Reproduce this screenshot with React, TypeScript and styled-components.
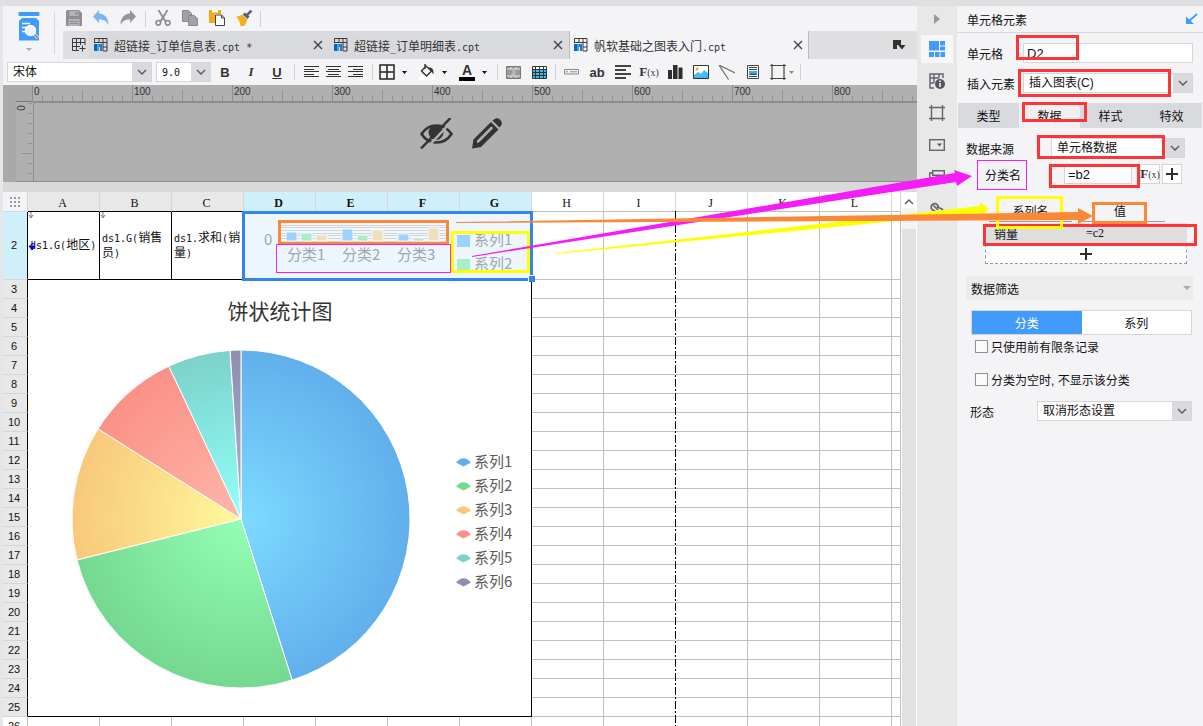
import React from 'react';
import styled, { createGlobalStyle } from 'styled-components';

const sans = `"Liberation Sans", "Noto Sans CJK SC", sans-serif`;
const mono = `"DejaVu Sans Mono", "Noto Sans CJK SC", monospace`;

const GlobalStyle = createGlobalStyle`
  * { box-sizing: border-box; }
  body { margin: 0; background: #f4f4f7; font-family: ${sans}; font-size: 12px; color: #111; overflow: hidden; }
  button, input, select { font: inherit; color: inherit; margin: 0; padding: 0; border: 0; border-radius: 0; background: none; outline: none; }
  svg { display: block; flex: none; }
`;

/* ---------- shell ---------- */

const Page = styled.div`
  position: relative;
  height: 100vh;
  display: flex;
  flex-direction: column;
  overflow: hidden;
`;
const TopStrip = styled.div`
  flex: 0 0 6px;
  background: #dfdfe1;
`;
const Body = styled.div`
  flex: 1;
  min-height: 0;
  display: flex;
  border-left: 3px solid #e6e6e8;
`;
const Workspace = styled.main`
  flex: 1;
  min-width: 0;
  display: flex;
  flex-direction: column;
`;

/* ---------- header ---------- */

const Header = styled.header`
  display: flex;
  height: 53px;
  flex: none;
`;
const LogoButton = styled.button`
  width: 52px;
  margin: 6px 0 5px;
  border-right: 1px solid #d9d9dc;
  display: flex;
  flex-direction: column;
  align-items: center;
  gap: 7px;
`;
const HeaderRight = styled.div`
  flex: 1;
  min-width: 0;
  margin-left: 8px;
  display: flex;
  flex-direction: column;
`;
const QuickBar = styled.div`
  height: 25px;
  display: flex;
  align-items: center;
`;
const QuickButton = styled.button`
  width: 27px;
  height: 24px;
  padding-left: 3px;
`;
const Separator = styled.span<{ $before?: number; $after?: number }>`
  width: 1px;
  height: 16px;
  background: #d2d2d6;
  flex: none;
  margin: 0 ${p => p.$after ?? 0}px 0 ${p => p.$before ?? 0}px;
`;
const TabBar = styled.nav`
  height: 28px;
  display: flex;
  background: #dfdfe1;
`;
const NewSheetButton = styled.button`
  width: 26px;
  flex: none;
  padding-left: 9px;
`;
const FileTab = styled.div<{ $active?: boolean }>`
  flex: 0 1 240px;
  min-width: 0;
  display: flex;
  align-items: center;
  gap: 6px;
  padding: 0 6px 0 5px;
  color: #333;
  white-space: nowrap;
  background: ${p => (p.$active ? '#f4f4f7' : '#d9dadd')};
  box-shadow: ${p => (p.$active ? 'inset 1px 0 #bcbcc0, inset -1px 0 #bcbcc0' : 'none')};
`;
const TabName = styled.span`
  flex: 1;
  overflow: hidden;
`;
const TabListButton = styled.button`
  margin-left: auto;
  padding-right: 11px;
`;
const LatinRun = styled.span`
  font-family: ${mono};
  font-size: 10px;
  white-space: pre;
`;

/* ---------- format bar ---------- */

const FormatBar = styled.div`
  height: 26px;
  flex: none;
  display: flex;
  align-items: center;
  padding-left: 4px;
`;
const ToolButton = styled.button<{ $width?: number }>`
  width: ${p => p.$width ?? 26}px;
  height: 24px;
  flex: none;
  display: flex;
  align-items: center;
  justify-content: center;
`;
const ComboTool = styled.button`
  width: 38px;
  height: 24px;
  margin-right: 2px;
  flex: none;
  display: flex;
  align-items: center;
  gap: 7px;
  &:last-of-type { gap: 3px; width: 34px; margin-right: 0; padding-left: 4px; }
`;
const Letter = styled.span<{ $italic?: boolean; $underline?: boolean }>`
  font-size: 13px;
  font-weight: 700;
  color: #333;
  font-family: ${p => (p.$italic ? '"Liberation Serif", serif' : sans)};
  font-style: ${p => (p.$italic ? 'italic' : 'normal')};
  text-decoration: ${p => (p.$underline ? 'underline' : 'none')};
`;
const ColorLetter = styled.span`
  width: 16px;
  font-size: 14px;
  line-height: 13px;
  font-weight: 700;
  color: #333;
  border-bottom: 4px solid #000;
`;
const Formula = styled.span`
  font-family: "Liberation Serif", serif;
  font-size: 13px;
  font-weight: 700;
  color: #333;
  small { font-size: 10px; font-weight: 400; }
`;

const SelectBox = styled.span<{ $width?: number; $gap?: number; $mono?: boolean }>`
  display: flex;
  flex: ${p => (p.$width ? `0 0 ${p.$width}px` : '1')};
  min-width: 0;
  margin-right: ${p => p.$gap ?? 0}px;
  height: 20px;
  border: 1px solid #d6d6da;
  background: #fff;
  font-family: ${p => (p.$mono ? mono : sans)};
  font-size: ${p => (p.$mono ? 10 : 12)}px;
`;
const NativeSelect = styled.select`
  appearance: none;
  flex: 1;
  min-width: 0;
  padding-left: 5px;
`;
const SelectArrow = styled.span`
  width: 19px;
  background: #d9dadd;
  display: flex;
  align-items: center;
  justify-content: center;
  pointer-events: none;
`;

/* ---------- ruler ---------- */

const Canvas = styled.section`
  height: 97px;
  flex: none;
  display: grid;
  grid-template: 17px 80px / 13px 17px minmax(0, 1fr);
  background: #b0b0b0;
  border-bottom: 1px solid #8e8e8e;
`;
const RulerGutter = styled.div`
  grid-row: 1 / 3;
  background: #a9a9a9;
`;
const RulerCorner = styled.div`
  border-bottom: 1px solid #777;
  background: #a9a9a9;
`;
const HorizontalRuler = styled.div`
  display: flex;
  overflow: hidden;
  margin-left: -1px;
  border-bottom: 1px solid #8e8e8e;
`;
const RulerMark = styled.span`
  flex: 0 0 100px;
  padding: 1px 0 0 1px;
  font-size: 10px;
  line-height: 12px;
  color: #333;
  border-left: 1px solid #8e8e8e;
  background:
    linear-gradient(#949494, #949494) 50px 5px / 1px 11px no-repeat border-box,
    repeating-linear-gradient(90deg, #949494 0 1px, transparent 1px 10px) 0 11px / 100% 5px no-repeat border-box;
`;
const VerticalRuler = styled.div`
  font-size: 10px;
  color: #333;
  line-height: 12px;
  background:
    linear-gradient(#949494, #949494) 5px 51px / 11px 1px no-repeat,
    repeating-linear-gradient(180deg, #949494 0 1px, transparent 1px 10px) 12px 1px / 4px 100% no-repeat;
  span { display: block; width: 12px; text-align: center; transform: rotate(-90deg); }
`;
const CanvasArea = styled.div`
  display: flex;
  justify-content: center;
  gap: 19px;
  padding: 15px 30px 0 0;
  border-left: 1px solid #8e8e8e;
  border-top: 1px solid #8e8e8e;
`;

/* ---------- sheet ---------- */

const SheetPane = styled.section`
  flex: 1;
  min-height: 0;
  display: flex;
  border-top: 10px solid #d9d9db;
`;
const SheetScroll = styled.div`
  position: relative;
  flex: 1;
  min-width: 0;
  overflow: hidden;
  background: #fff;
`;
const SheetTable = styled.table`
  width: 100%;
  table-layout: fixed;
  border-collapse: separate;
  border-spacing: 0;
  th, td { padding: 0; overflow: hidden; }
`;
type Tone = 'grey' | 'blue' | 'white';
const tones: Record<Tone, string> = { grey: '#e8e8e8', blue: '#cfeffb', white: '#ffffff' };
const ColumnHead = styled.th<{ $tone: Tone; $dark?: boolean }>`
  height: 20px;
  font: ${p => (p.$tone === 'blue' ? 700 : 400)} 12px "Liberation Serif", serif;
  padding: 3px 2px 0 0 !important;
  background: ${p => tones[p.$tone]};
  border-right: 1px solid #d6d6d9;
  border-bottom: 1px solid ${p => (p.$dark ? '#000' : '#c0c0c0')};
`;
const CornerHead = styled.th`
  background: #f4f4f7;
  border-right: 1px solid #d6d6d9;
  border-bottom: 1px solid #d6d6d9;
  svg { margin: 0 auto; }
`;
const RowHead = styled.th<{ $tone: Tone; $tall?: boolean }>`
  height: ${p => (p.$tall ? 68 : 19)}px;
  font: 400 11px ${sans};
  line-height: 17px;
  padding-right: 2px !important;
  background: ${p => tones[p.$tone]};
  border-right: 1px solid ${p => (p.$tone === 'white' ? '#c0c0c0' : '#000')};
  border-bottom: 1px solid #d6d6d9;
`;
const Cell = styled.td`
  border-right: 1px solid #c0c0c0;
  border-bottom: 1px solid #c0c0c0;
`;
const DataCell = styled.td`
  position: relative;
  border-right: 1px solid #000;
  border-bottom: 1px solid #000;
  line-height: 15px;
  padding: 0 2px !important;
  white-space: pre;
`;
const CellMarker = styled.svg`
  position: absolute;
  left: 0;
  top: 0;
`;
const ChartCell = styled.td`
  border-right: 1px solid #000;
  border-bottom: 1px solid #000;
  vertical-align: top;
`;
const SelectedCell = styled.td`
  background: #edf5fd;
  vertical-align: top;
`;
const Selection = styled.div`
  position: absolute;
  left: 239px;
  top: 19px;
  width: 291px;
  height: 70px;
  border: 3px solid #3284ee;
  &::after {
    content: '';
    position: absolute;
    right: -5px;
    bottom: -4px;
    width: 6px;
    height: 6px;
    background: #3284ee;
    border: solid #fff;
    border-width: 1px 0 0 1px;
  }
`;
const PageBreak = styled.div`
  position: absolute;
  left: 672px;
  top: 19px;
  bottom: 0;
  width: 1px;
  background: repeating-linear-gradient(180deg, #000 0 8px, #fff 8px 10px, #000 10px 12px, #fff 12px 14px);
`;
const ScrollBar = styled.div`
  width: 16px;
  background: #f3f3f4;
  display: flex;
  flex-direction: column;
  border: solid #fafafa;
  border-width: 1px 1px 0;
`;
const ScrollUp = styled.button`
  height: 15px;
  background: #fff;
  svg { margin: 0 auto; }
`;
const ScrollThumb = styled.div`
  flex: 1;
  margin-top: 21px;
  background: #e1e1e1;
`;

/* ---------- rail and panel ---------- */

const Rail = styled.aside`
  flex: 0 0 40px;
  background: #e8e8e8;
  display: flex;
  flex-direction: column;
  align-items: center;
`;
const RailToggle = styled.button`
  height: 25px;
  margin-bottom: 4px;
`;
const RailButton = styled.button<{ $active?: boolean }>`
  width: 32px;
  height: 28px;
  margin-bottom: 4px;
  background: ${p => (p.$active ? '#f7f7fa' : 'transparent')};
  display: flex;
  align-items: center;
  justify-content: center;
`;
const Panel = styled.aside`
  position: relative;
  flex: 0 0 246px;
  min-width: 0;
  background: #f4f4f7;
`;
const PanelTitle = styled.h2`
  margin: 0;
  height: 27px;
  padding: 0 5px 0 10px;
  font-size: 12px;
  font-weight: 400;
  display: flex;
  align-items: center;
  justify-content: space-between;
  border-bottom: 1px solid #d6d6da;
`;
const Field = styled.div<{ $top?: number; $left?: number; $right?: number; $label?: number }>`
  display: flex;
  align-items: center;
  height: 20px;
  margin-top: ${p => p.$top ?? 10}px;
  padding: 0 ${p => p.$right ?? 10}px 0 ${p => p.$left ?? 10}px;
  label { flex: 0 0 ${p => p.$label ?? 56}px; }
`;
const TextBox = styled.input`
  flex: 1;
  width: 0;
  min-width: 0;
  height: 20px;
  padding-left: 3px;
  font-size: 13px;
  background: #fff;
  border: 1px solid #d6d6da;
`;
const SmallButton = styled.button<{ $gap: number }>`
  width: 20px;
  height: 20px;
  flex: none;
  margin-left: ${p => p.$gap}px;
  background: #fff;
  border: 1px solid #d6d6da;
  display: flex;
  align-items: center;
  justify-content: center;
`;
const PanelTabs = styled.div`
  display: grid;
  grid-template-columns: repeat(4, 1fr);
  margin: 10px 1px 0;
  height: 25px;
`;
const PanelTab = styled.button<{ $active?: boolean }>`
  background: ${p => (p.$active ? '#f0f0f2' : '#d9dadd')};
`;
const SeriesTable = styled.table`
  margin: 19px 16px 0 28px;
  width: 202px;
  table-layout: fixed;
  border-collapse: separate;
  border-spacing: 0;
  th, td { padding: 0; font-weight: 400; }
  th { height: 19px; }
  th span { display: block; height: 19px; line-height: 19px; border-bottom: 1px solid #9a9a9e; }
  th:first-child span { margin: 0 14px 0 4px; }
  th:last-child span { margin: 0 22px 0 -3px; padding-right: 8px; }
  td { height: 22px; border-top: 1px solid #f4f4f7; border-bottom: 1px solid #f4f4f7; background: #dededf; }
  td:first-child { padding-left: 9px; }
  td:last-child { font: 12px "Liberation Serif", serif; }
`;
const AddRow = styled.button`
  display: flex;
  align-items: center;
  justify-content: center;
  width: 202px;
  height: 20px;
  margin: 0 0 0 28px;
  background: #fff;
  border: 1px dashed #999;
`;
const SectionHead = styled.h3`
  display: flex;
  align-items: center;
  justify-content: space-between;
  margin: 12px 10px 0 9px;
  padding: 0 2px 0 5px;
  height: 24px;
  font-size: 12px;
  font-weight: 400;
  background: #ececec;
`;
const Segmented = styled.div`
  display: grid;
  grid-template-columns: 1fr 1fr;
  margin: 10px 11px 0 14px;
  height: 25px;
  border: 1px solid #d6d6da;
  background: #fff;
`;
const Segment = styled.button<{ $active?: boolean }>`
  background: ${p => (p.$active ? '#409bfb' : '#fff')};
  color: ${p => (p.$active ? '#fff' : '#111')};
`;
const CheckRow = styled.label<{ $top: number }>`
  display: flex;
  align-items: center;
  gap: 3px;
  height: 20px;
  margin-top: ${p => p.$top}px;
  padding-left: 18px;
`;
const CheckBox = styled.input`
  appearance: none;
  width: 13px;
  height: 13px;
  border: 1px solid #8f8f94;
  background: #fafafa;
`;

/* ---------- annotations ---------- */

const Mark = styled.div<{ $x: number; $y: number; $w: number; $h: number; $color: string; $thin?: boolean }>`
  position: absolute;
  left: ${p => p.$x}px;
  top: ${p => p.$y}px;
  width: ${p => p.$w}px;
  height: ${p => p.$h}px;
  border: ${p => (p.$thin ? 1 : 3)}px solid ${p => p.$color};
  pointer-events: none;
`;
const Arrows = styled.svg`
  position: absolute;
  left: 0;
  top: 0;
  pointer-events: none;
`;

const RED = '#fb3638';
const YELLOW = '#ffff00';
const ORANGE = '#f98839';
const MAGENTA = '#f41df6';

/* ---------- pieces ---------- */

function Mixed({ text }: { text: string }) {
  return (
    <>
      {text.split(/([\x20-\x7e]+)/).filter(Boolean).map((run, i) =>
        /^[\x20-\x7e]/.test(run) ? <LatinRun key={i}>{run}</LatinRun> : run
      )}
    </>
  );
}

const Caret = ({ color = '#111', size = 5 }: { color?: string; size?: number }) => (
  <svg width={size} height={Math.ceil(size / 2)} viewBox="0 0 6 3" preserveAspectRatio="none"><path d="M0 0h6L3 3z" fill={color} /></svg>
);
const Chevron = ({ up }: { up?: boolean }) => (
  <svg width="10" height="14" viewBox="0 0 10 14"><path d={up ? 'M1 10l4-4 4 4' : 'M1 5l4 4 4-4'} fill="none" stroke="#555" strokeWidth="1.3" /></svg>
);
const Plus = () => (
  <svg width="12" height="12" viewBox="0 0 12 12"><path d="M6 0v12M0 6h12" stroke="#2b2b2b" strokeWidth="2" /></svg>
);

function Select({ id, value, label, width, gap, isMono }: { id?: string; value: string; label?: string; width?: number; gap?: number; isMono?: boolean }) {
  return (
    <SelectBox $width={width} $gap={gap} $mono={isMono}>
      <NativeSelect id={id} aria-label={label} defaultValue={value}><option>{value}</option></NativeSelect>
      <SelectArrow><Chevron /></SelectArrow>
    </SelectBox>
  );
}

const Logo = () => (
  <svg width="22" height="29" viewBox="0 0 22 29">
    <rect x="0.5" y="0" width="21" height="4" rx="1" fill="#409bfb" />
    <path d="M1 9l3-3h14l3 3v19.5H1z" fill="#409bfb" />
    <path d="M4 11.5h8M4 15.5h5M4 19.5h4" stroke="#fff" strokeWidth="1.5" />
    <circle cx="12.5" cy="18.5" r="5" fill="#e7f3ff" stroke="#fff" strokeWidth="1.5" />
    <path d="M16 22l4 4" stroke="#fff" strokeWidth="3" />
    <path d="M16.5 22.500l3.500 3.500" stroke="#777" strokeWidth="1.5" />
  </svg>
);

const SheetIcon = () => (
  <svg width="14" height="14" viewBox="0 0 14 14">
    <path d="M.5 5V.5h12.500v12.500H9M.5 4.500h12.500M5 .5v4M9 .5v12.500M9 9h4" fill="none" stroke="#3a3a3e" />
    <path d="M0 6h3v7H0z" fill="#1560b8" /><path d="M3 6h4v3H5v4H3V9z" fill="#36a5ea" /><path d="M5 6h3v7H6V9H5z" fill="#1b7bd6" />
  </svg>
);
const CloseIcon = () => (
  <svg width="10" height="10" viewBox="0 0 10 10"><path d="M1 1l8 8M9 1L1 9" stroke="#444" strokeWidth="1.4" /></svg>
);

const quick: Record<string, React.ReactNode> = {
  保存: <><path d="M0 1.500Q0 0 1.500 0H13l3 3v13H0z" fill="#8f8f92" /><path d="M3.500 1h9v5h-9zM2.500 9h11v7h-11z" fill="#b4b4b7" /><path d="M9.500 2h2v3h-2zM4 11h8v1H4zM4 13h8v1H4z" fill="#8f8f92" /></>,
  撤销: <path d="M6 0v3.500c6 .5 9.500 4.500 9.500 11.500C13.500 11 11 9.500 6 9.500V13L0 6.500z" fill="#7db6f2" />,
  重做: <path d="M10 0v3.500C4 4 .5 8 .5 15 2.500 11 5 9.500 10 9.500V13l6-6.500z" fill="#969699" />,
};
const quickMore: Record<string, React.ReactNode> = {
  剪切: <><path d="M3.500 0l7 11.500M12.500 0l-7 11.500" stroke="#8b8b8e" strokeWidth="1.8" /><circle cx="3.300" cy="12.800" r="2.300" fill="none" stroke="#8b8b8e" strokeWidth="1.600" /><circle cx="12.700" cy="12.800" r="2.300" fill="none" stroke="#8b8b8e" strokeWidth="1.600" /></>,
  复制: <><path d="M.5.5h6l3 3v8h-9z" fill="#a2a2a5" stroke="#8b8b8e" /><path d="M6.500 5.500h6l3 3v7h-9z" fill="#a2a2a5" stroke="#8b8b8e" /></>,
  粘贴: <><path d="M0 0h12v4H6v9H0z" fill="#f5a714" /><path d="M3 0h6v2.500H3z" fill="#fff" /><path d="M6.500 5h6l3 3v7.500h-9z" fill="#fff" stroke="#444" /><path d="M12.500 5v3h3" fill="none" stroke="#444" /></>,
  格式刷: <><path d="M15.500.5L10 6" stroke="#5d6272" strokeWidth="2.500" /><path d="M9 2.500l4.500 4-2 2.500-5-4.500z" fill="#5d6272" /><path d="M0 6.500c2 0 4-.5 6-1.800l5.300 4.800C10.500 12 9.500 14.500 8 16H4.500C4 12 2.500 9 0 6.500z" fill="#f5ae1c" /></>,
};

const alignIcon = (starts: number[], widths: number[]) => (
  <svg width="15" height="12" viewBox="0 0 15 12" shapeRendering="crispEdges">
    {starts.map((s, i) => <rect key={i} x={s} y={[0, 3, 5, 8, 10][i]} width={widths[i]} height="1" fill="#333" />)}
  </svg>
);

const railIcons = [
  <g fill="#409bfb"><rect width="10" height="9.500" /><rect x="11" width="5" height="4.500" /><rect x="11" y="5.500" width="5" height="4" /><rect y="11" width="5" height="5" /><rect x="6" y="11" width="4.500" height="5" /><rect x="11.500" y="11" width="4.500" height="5" /></g>,
  <><path d="M5 15H1V1h13v4M1 5h9M1 10h4M5 1v9M10 1v4" fill="none" stroke="#62646e" strokeWidth="1.4" /><circle cx="11" cy="11" r="5" fill="#55575f" /><path d="M11 10v4M11 7.500v1.500" stroke="#fff" strokeWidth="1.5" /></>,
  <path d="M2.500 0v16M13.500 0v16M0 2.500h16M0 13.500h16" stroke="#62646e" strokeWidth="1.4" />,
  <><rect x=".7" y="2.700" width="14.600" height="10.600" fill="none" stroke="#62646e" strokeWidth="1.4" /><path d="M8 6.500h5l-2.500 3z" fill="#55575f" /></>,
  <path d="M3.700 1.700h11.600v4.600H3.700zM3 4H.7v10.300M4 9h11.300v5H4z" fill="none" stroke="#62646e" strokeWidth="1.4" />,
  <path d="M6 10L3 8.500a3.500 3.500 0 1 1 5.500-4.500L10 7M4.500 4.500L9 9M8 6l4 1.500a3.500 3.500 0 1 1-4 5.500L7 11" fill="none" stroke="#62646e" strokeWidth="1.700" />,
];

const slices = [
  { from: 0, to: 162.4, inner: '#7edaff', outer: '#61afec' },
  { from: 162.4, to: 256, inner: '#93ffb4', outer: '#75d890' },
  { from: 256, to: 302.2, inner: '#fff99b', outer: '#f8c87b' },
  { from: 302.2, to: 334.7, inner: '#ffb6aa', outer: '#fa9186' },
  { from: 334.7, to: 356.3, inner: '#92fffb', outer: '#7cd2cb' },
  { from: 356.3, to: 360, inner: '#b0aed0', outer: '#908ead' },
];

function PieChart() {
  const cx = 213, cy = 239, r = 169;
  const at = (deg: number) => {
    const a = (deg * Math.PI) / 180;
    return `${(cx + r * Math.sin(a)).toFixed(1)} ${(cy - r * Math.cos(a)).toFixed(1)}`;
  };
  return (
    <svg width="503" height="436" viewBox="0 0 503 436" fontFamily="Noto Sans CJK SC, sans-serif">
      <defs>
        {slices.map((s, i) => (
          <radialGradient key={i} id={`slice${i}`} gradientUnits="userSpaceOnUse" cx={cx} cy={cy} r={r}>
            <stop offset="0" stopColor={s.inner} /><stop offset="1" stopColor={s.outer} />
          </radialGradient>
        ))}
      </defs>
      <text x="252" y="39" fontSize="21" textAnchor="middle" fill="#333">饼状统计图</text>
      {slices.map((s, i) => (
        <path key={i} d={`M${cx} ${cy}L${at(s.from)}A${r} ${r} 0 ${s.to - s.from > 180 ? 1 : 0} 1 ${at(s.to)}z`} fill={`url(#slice${i})`} stroke="#fff" />
      ))}
      {slices.map((s, i) => (
        <g key={i} transform={`translate(428 ${182 + i * 24})`}>
          <path d="M0 0.500Q7.500-8 15 0.500L7.500 4.500z" fill={s.outer} />
          <text x="18" y="5" fontSize="15" fill="#5c5c5c">{`系列${i + 1}`}</text>
        </g>
      ))}
    </svg>
  );
}

const bars = [[9, 8, 6], [12, 6, 11], [7, 3, 13]];
const barColors = ['#9dd2fb', '#a9edc9', '#ece0bf'];

function BarPreview() {
  return (
    <svg width="288" height="67" viewBox="0 0 288 67" fontFamily="Noto Sans CJK SC, sans-serif" fontSize="15" fill="#a0a7ae">
      <text x="20" y="33">0</text>
      <rect x="36" y="11" width="166" height="19" fill="#f4f8fc" />
      {[13, 15, 18, 21, 23, 26, 29].map(y => <path key={y} d={`M36 ${y}.5h166`} stroke="#ccd3da" />)}
      {bars.map((group, g) => group.map((h, i) => (
        <rect key={`${g}${i}`} x={42 + g * 56 + i * 15} y={29 - h} width="11" height={h} fill={barColors[i]} stroke="#f4f8fc" />
      )))}
      {[0, 1, 2].map(i => <text key={i} x={43 + i * 55} y="48">{`分类${i + 1}`}</text>)}
      {[0, 1].map(i => (
        <g key={i}>
          <rect x="213" y={23 + i * 24} width="13" height="12" fill={barColors[i]} />
          <text x="230" y={33 + i * 24}>{`系列${i + 1}`}</text>
        </g>
      ))}
      <rect x="35.500" y="9.500" width="168" height="22" fill="none" stroke={ORANGE} strokeWidth="3" />
      <rect x="32.500" y="32.500" width="174" height="28" fill="none" stroke={MAGENTA} />
      <rect x="208.500" y="20.500" width="76" height="39" fill="none" stroke={YELLOW} strokeWidth="3" />
    </svg>
  );
}

const columns = 'ABCDEFGHIJKL'.split('');
const fillers = (n: number) => Array.from({ length: n }, (_, i) => <Cell key={i} />);

function Sheet() {
  return (
    <SheetPane>
      <SheetScroll>
        <SheetTable>
          <colgroup>
            <col style={{ width: 25 }} />
            {columns.map(c => <col key={c} style={{ width: 72 }} />)}
            <col />
          </colgroup>
          <thead>
            <tr>
              <CornerHead>
                <svg width="12" height="10" viewBox="0 0 12 10" fill="#9a9a9e">
                  {[0, 1, 2].map(r => [0, 1, 2].map(c => <rect key={`${r}${c}`} x={c * 4 + 1} y={r * 4} width="2" height="2" />))}
                </svg>
              </CornerHead>
              {columns.map((c, i) => <ColumnHead key={c} $tone={i < 3 ? 'grey' : i < 7 ? 'blue' : 'white'} $dark={i < 3}>{c}</ColumnHead>)}
              <ColumnHead $tone="white" />
            </tr>
          </thead>
          <tbody>
            <tr>
              <RowHead $tone="blue" $tall>2</RowHead>
              <DataCell>
                <CellMarker width="8" height="40" viewBox="0 0 8 40"><path d="M3 0v5M1 3l2 3 2-3" stroke="#777" fill="none" /><path d="M4 29v9M1 34l3 4 3-4z" stroke="#00f" fill="#00f" /></CellMarker>
                <Mixed text="ds1.G(地区)" />
              </DataCell>
              <DataCell>
                <CellMarker width="8" height="8" viewBox="0 0 8 8"><path d="M3 0v5M1 3l2 3 2-3" stroke="#777" fill="none" /></CellMarker>
                <Mixed text="ds1.G(销售" /><br /><Mixed text="员)" />
              </DataCell>
              <DataCell><Mixed text="ds1.求和(销" /><br /><Mixed text="量)" /></DataCell>
              <SelectedCell colSpan={4}><BarPreview /></SelectedCell>
              {fillers(6)}
            </tr>
            {Array.from({ length: 24 }, (_, i) => i + 3).map(n => (
              <tr key={n}>
                <RowHead $tone={n === 26 ? 'white' : 'grey'}>{n}</RowHead>
                {n === 3 && <ChartCell colSpan={7} rowSpan={23}><PieChart /></ChartCell>}
                {fillers(n === 26 ? 13 : 6)}
              </tr>
            ))}
          </tbody>
        </SheetTable>
        <PageBreak />
        <Selection />
      </SheetScroll>
      <ScrollBar>
        <ScrollUp aria-label="向上滚动"><Chevron up /></ScrollUp>
        <ScrollThumb />
      </ScrollBar>
    </SheetPane>
  );
}

function Formatting() {
  return (
    <FormatBar>
      <Select label="字体" value="宋体" width={145} gap={4} />
      <Select label="字号" value="9.0" width={55} gap={1} isMono />
      <ToolButton><Letter>B</Letter></ToolButton>
      <ToolButton><Letter $italic>I</Letter></ToolButton>
      <ToolButton><Letter $underline>U</Letter></ToolButton>
      <Separator $before={4} $after={5} />
      <ToolButton $width={22} aria-label="左对齐">{alignIcon([0, 0, 0, 0, 0], [15, 10, 15, 10, 15])}</ToolButton>
      <ToolButton $width={22} aria-label="居中">{alignIcon([0, 2, 0, 2, 0], [15, 11, 15, 11, 15])}</ToolButton>
      <ToolButton $width={22} aria-label="右对齐">{alignIcon([0, 5, 0, 5, 0], [15, 10, 15, 10, 15])}</ToolButton>
      <Separator $before={6} $after={6} />
      <ComboTool aria-label="边框">
        <svg width="16" height="16" viewBox="0 0 16 16"><path d="M1 1h14v14H1zM8 1v14M1 8h14" fill="none" stroke="#222" strokeWidth="1.5" /></svg><Caret />
      </ComboTool>
      <ComboTool aria-label="填充">
        <svg width="16" height="16" viewBox="0 0 16 16"><path d="M0 12h16v4H0z" fill="#fff" /><path d="M7 2l5.500 5L7.500 12 2.500 7zM6 0v5" fill="none" stroke="#333" strokeWidth="1.400" /><path d="M9 3.500c4-.5 6 1.500 5.500 7l-2-3z" fill="#333" /></svg><Caret />
      </ComboTool>
      <ComboTool aria-label="字体颜色">
        <ColorLetter>A</ColorLetter><Caret />
      </ComboTool>
      <Separator $before={-2} $after={2} />
      <ToolButton aria-label="合并单元格">
        <svg width="15" height="13" viewBox="0 0 15 13"><path d="M.5.5h14v12H.5z" fill="#999" stroke="#777" /><path d="M1 3h13M1 10h13M5 1v2M10 1v2M5 10v2M10 10v2" stroke="#e5e5e5" /><path d="M6 5h3v3.500H6V7h3" fill="none" stroke="#c4c4c4" /></svg>
      </ToolButton>
      <ToolButton aria-label="表格">
        <svg width="15" height="13" viewBox="0 0 15 13"><path d="M.5.5h14v12H.5z" fill="#36bdf8" stroke="#333" /><path d="M1 1h13v2H1z" fill="#fff" /><path d="M0 3.500h15M0 6.500h15M0 9.500h15M3.500 0v13M7.500 0v13M11.500 0v13" stroke="#333" /></svg>
      </ToolButton>
      <Separator $before={3} $after={2} />
      <ToolButton aria-label="文本框">
        <svg width="15" height="6" viewBox="0 0 15 6"><path d="M.5.5h14v4.500H.5zM2 2.800h2M6 2.800h7" fill="none" stroke="#888" /></svg>
      </ToolButton>
      <ToolButton><Letter>ab</Letter></ToolButton>
      <ToolButton aria-label="富文本">
        <svg width="16" height="14" viewBox="0 0 16 14"><path d="M0 1h16M0 5h11M0 9h16M0 13h11" stroke="#444" strokeWidth="1.800" /></svg>
      </ToolButton>
      <ToolButton><Formula>F<small>(x)</small></Formula></ToolButton>
      <ToolButton aria-label="图表">
        <svg width="15" height="14" viewBox="0 0 15 14" fill="#2e2e2e"><path d="M0 5h4v9H0zM5 0h4.500v14H5zM10.500 2.500h4V14h-4z" /></svg>
      </ToolButton>
      <ToolButton aria-label="图片">
        <svg width="16" height="14" viewBox="0 0 16 14"><path d="M.5.5h15v13H.5z" fill="#fff" stroke="#333" /><circle cx="4" cy="4" r="1.500" fill="#f5a623" /><path d="M1 10l4-3 3 2 3-4 4 3v5H1z" fill="#43bdf7" /></svg>
      </ToolButton>
      <ToolButton aria-label="斜线">
        <svg width="16" height="15" viewBox="0 0 16 15"><path d="M0 0l16 8M0 0l9.500 14.500" stroke="#777" strokeWidth="1.300" /></svg>
      </ToolButton>
      <ToolButton aria-label="子报表">
        <svg width="12" height="14" viewBox="0 0 12 14"><path d="M.5.500h11v13H.5z" fill="#fff" stroke="#444" /><path d="M2 2.500h8M2 4.500h8M2 11.500h8" stroke="#444" /><path d="M2 6h8v4H2z" fill="#43a8f0" /><path d="M2 10l3-2 2 1 1-1 2 2z" fill="#155ea8" /></svg>
      </ToolButton>
      <ComboTool aria-label="悬浮元素">
        <svg width="16" height="16" viewBox="0 0 16 16"><path d="M2 0v16M14 0v16M0 1.500h16M0 14.500h16" stroke="#444" strokeWidth="1.200" /></svg><Caret color="#888" />
      </ComboTool>
      <Separator />
    </FormatBar>
  );
}

const files = ['超链接_订单信息表.cpt *', '超链接_订单明细表.cpt', '帆软基础之图表入门.cpt'];

export default function App() {
  const rulerMarks = Math.ceil((window.innerWidth - 319) / 100);
  return (
    <Page>
      <GlobalStyle />
      <TopStrip />
      <Body>
        <Workspace>
          <Header>
            <LogoButton aria-label="预览"><Logo /><Caret color="#aaa" size={6} /></LogoButton>
            <HeaderRight>
              <QuickBar>
                {Object.entries(quick).map(([name, art]) => (
                  <QuickButton key={name} aria-label={name}><svg width="17" height="17" viewBox="0 0 17 17">{art}</svg></QuickButton>
                ))}
                <Separator $before={1} $after={6} />
                {Object.entries(quickMore).map(([name, art]) => (
                  <QuickButton key={name} aria-label={name}><svg width="17" height="17" viewBox="0 0 17 17">{art}</svg></QuickButton>
                ))}
                <Separator />
              </QuickBar>
              <TabBar>
                <NewSheetButton aria-label="新建">
                  <svg width="14" height="14" viewBox="0 0 14 14"><path d="M7 12.500H.5V.5h12.500V7M.5 4.500h12.500M.5 8.500H8M4.500.5v12M8.500.5V7M10.500 7.500v6M7.500 10.500h6" fill="none" stroke="#3a3a3e" /></svg>
                </NewSheetButton>
                {files.map((name, i) => (
                  <FileTab key={name} $active={i === 2}>
                    <SheetIcon />
                    <TabName><Mixed text={name} /></TabName>
                    <button aria-label="关闭"><CloseIcon /></button>
                  </FileTab>
                ))}
                <TabListButton aria-label="全部标签">
                  <svg width="13" height="11" viewBox="0 0 13 11" fill="#333"><path d="M0 0h8v5H4v4H0zM5 5h7.500L9 9.500z" /></svg>
                </TabListButton>
              </TabBar>
            </HeaderRight>
          </Header>
          <Formatting />
          <Canvas>
            <RulerGutter />
            <RulerCorner />
            <HorizontalRuler>
              {Array.from({ length: rulerMarks }, (_, i) => <RulerMark key={i}>{i * 100}</RulerMark>)}
            </HorizontalRuler>
            <VerticalRuler><span>0</span></VerticalRuler>
            <CanvasArea>
              <svg width="33" height="31" viewBox="0 0 33 31">
                <path d="M1.500 16Q7 7.500 16.500 7.500T31.500 16Q26 24.500 16.500 24.500T1.500 16z" fill="none" stroke="#333" strokeWidth="2.600" />
                <circle cx="16" cy="14.500" r="7.500" fill="#333" />
                <path d="M32 3L4 33" stroke="#b0b0b0" strokeWidth="2.500" />
                <path d="M30.500 0L1 30.500" stroke="#333" strokeWidth="2.500" />
              </svg>
              <svg width="30" height="31" viewBox="0 0 30 31">
                <path d="M0 30.500l1.500-9L19 4l7.500 7.500L9 29z" fill="#333" />
                <path d="M20.500 2.500l3-2q3-1 5 1.500t1 5l-2 2.500z" fill="#333" />
                <path d="M6 23.500L19.500 10" stroke="#b0b0b0" strokeWidth="2.500" strokeLinecap="round" />
              </svg>
            </CanvasArea>
          </Canvas>
          <Sheet />
        </Workspace>
        <Rail>
          <RailToggle aria-label="收起"><svg width="6" height="10" viewBox="0 0 6 10"><path d="M0 0l6 5-6 5z" fill="#999" /></svg></RailToggle>
          {railIcons.map((art, i) => (
            <RailButton key={i} $active={i === 0}><svg width="16" height="16" viewBox="0 0 16 16">{art}</svg></RailButton>
          ))}
        </Rail>
        <Panel>
          <PanelTitle>
            单元格元素
            <svg width="13" height="12" viewBox="0 0 13 12"><path d="M12 1L3 9" stroke="#409bfb" strokeWidth="1.800" /><path d="M1 3.500V11h8z" fill="#409bfb" /></svg>
          </PanelTitle>
          <Field><label htmlFor="cell">单元格</label><TextBox id="cell" defaultValue="D2" /></Field>
          <Field><label htmlFor="insert">插入元素</label><Select id="insert" value="插入图表(C)" /></Field>
          <PanelTabs>
            {['类型', '数据', '样式', '特效'].map((t, i) => <PanelTab key={t} $active={i === 1}>{t}</PanelTab>)}
          </PanelTabs>
          <Field $left={9} $right={18} $label={85}><label htmlFor="source">数据来源</label><Select id="source" value="单元格数据" /></Field>
          <Field $top={6} $left={28} $right={21} $label={79}>
            <label htmlFor="category">分类名</label>
            <TextBox id="category" defaultValue="=b2" />
            <SmallButton $gap={8}><Formula>F<small>(x)</small></Formula></SmallButton>
            <SmallButton $gap={2} aria-label="添加分类"><Plus /></SmallButton>
          </Field>
          <SeriesTable>
            <thead><tr><th><span>系列名</span></th><th><span>值</span></th></tr></thead>
            <tbody><tr><td>销量</td><td>=c2</td></tr></tbody>
          </SeriesTable>
          <AddRow aria-label="添加系列"><Plus /></AddRow>
          <SectionHead>数据筛选<Caret color="#aaa" size={8} /></SectionHead>
          <Segmented><Segment $active>分类</Segment><Segment>系列</Segment></Segmented>
          <CheckRow $top={1}><CheckBox type="checkbox" />只使用前有限条记录</CheckRow>
          <CheckRow $top={13}><CheckBox type="checkbox" />分类为空时, 不显示该分类</CheckRow>
          <Field $top={12} $left={13} $right={11} $label={67}><label htmlFor="form">形态</label><Select id="form" value="取消形态设置" /></Field>
          <Mark $x={59} $y={29} $w={63} $h={25} $color={RED} />
          <Mark $x={61} $y={63} $w={153} $h={28} $color={RED} />
          <Mark $x={65} $y={96} $w={65} $h={20} $color={RED} />
          <Mark $x={80} $y={129} $w={128} $h={24} $color={RED} />
          <Mark $x={92} $y={158} $w={91} $h={24} $color={RED} />
          <Mark $x={20} $y={154} $w={50} $h={30} $color={MAGENTA} $thin />
          <Mark $x={26} $y={218} $w={214} $h={22} $color={RED} />
          <Mark $x={39} $y={190} $w={67} $h={33} $color={YELLOW} />
          <Mark $x={135} $y={196} $w={55} $h={22} $color={ORANGE} />
        </Panel>
      </Body>
      <Arrows width="1203" height="300" viewBox="0 0 1203 300">
        <polygon points="556,253 980,206 980,202 989,209 980,217 979,213 556,254" fill={YELLOW} />
        <polygon points="472,256 955,173 954,170 972,176 957,186 956,182 472,257" fill={MAGENTA} />
        <polygon points="456,222 1078,212 1078,208 1093,216 1078,224 1078,220 456,223" fill={ORANGE} />
      </Arrows>
    </Page>
  );
}
